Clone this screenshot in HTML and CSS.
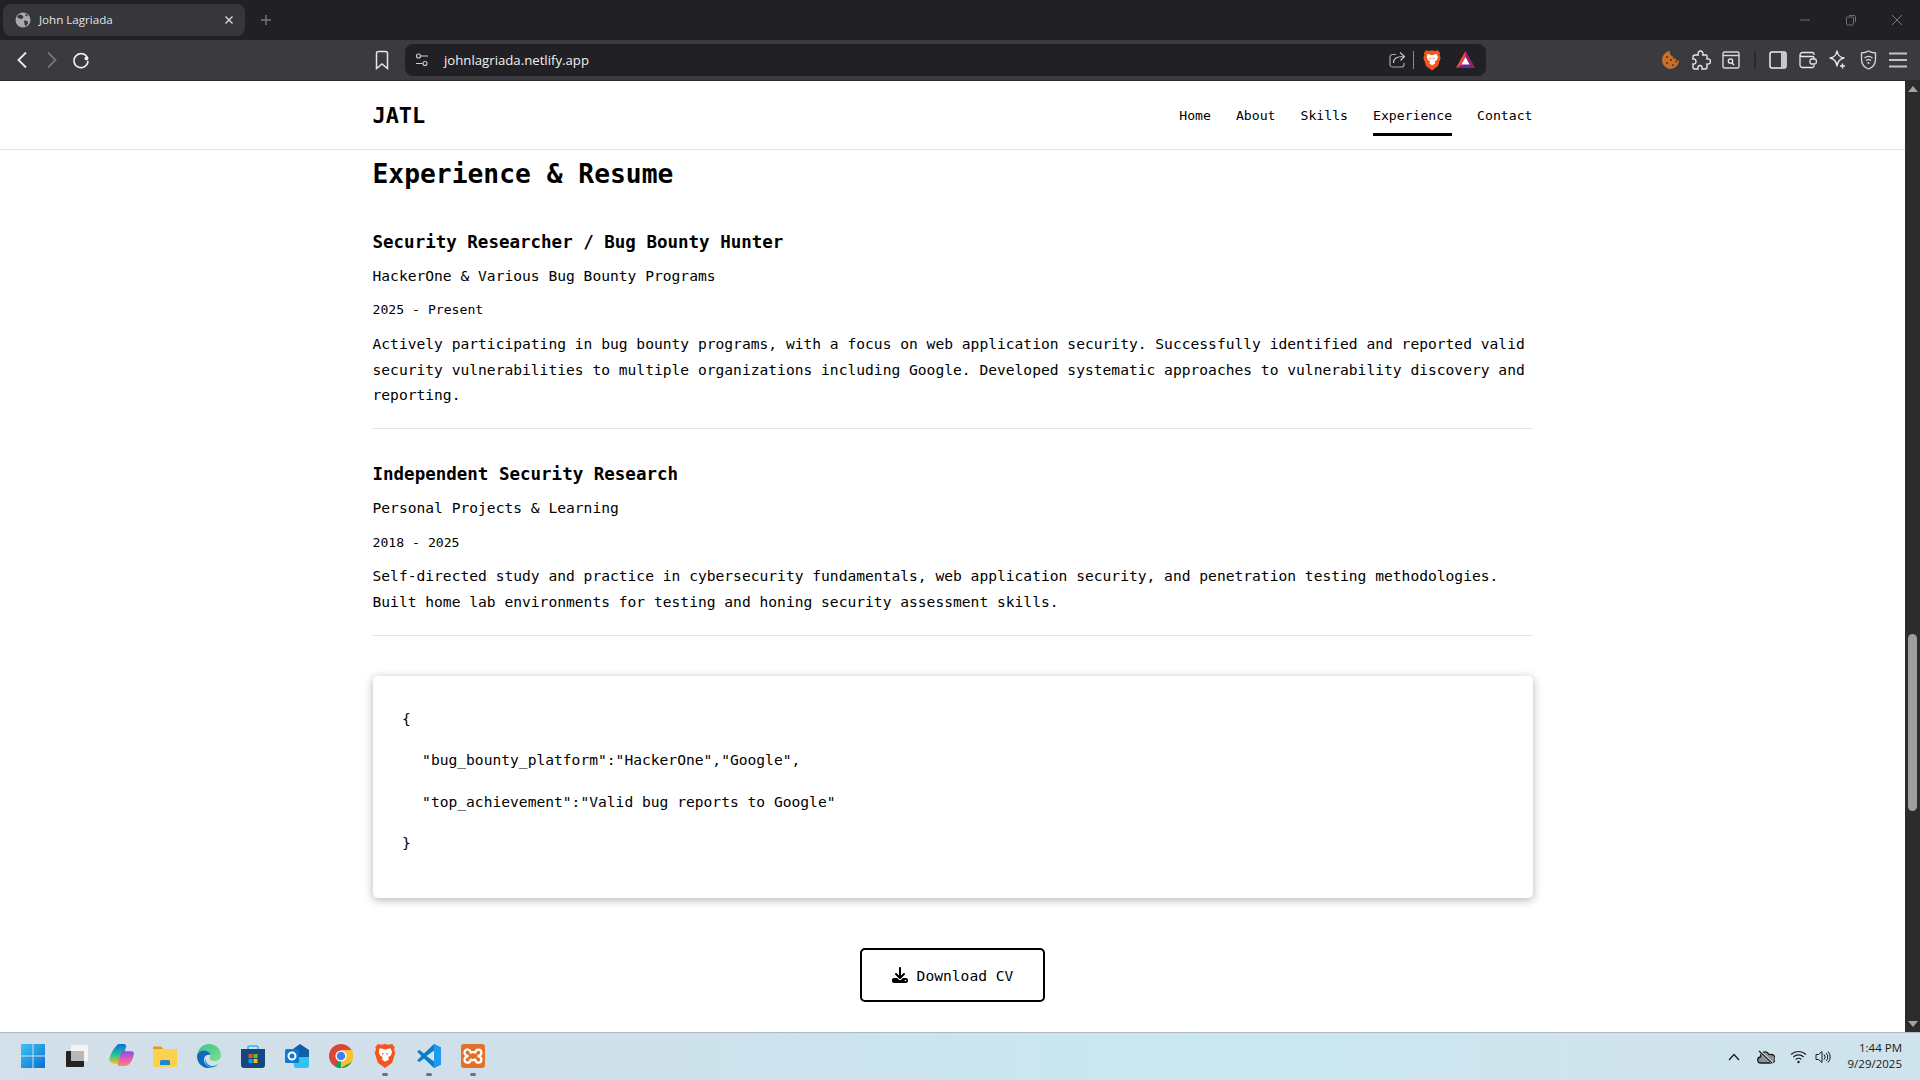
FILE: index.html
```html
<!DOCTYPE html>
<html lang="en">
<head>
<meta charset="utf-8">
<title>John Lagriada</title>
<link rel="stylesheet" href="styles.css">
</head>
<body>
<header class="tabstrip">
  <div class="tab">
    <svg class="tab-globe" width="16" height="16" viewBox="0 0 16 16"><circle cx="8" cy="8" r="7.5" fill="#a8a8ad"/><path d="M4 2.500l3 .5 1.500 2-1.500 2-3-.5-2-1.500zM9 8.500l3.500 .5.500 2.500-2.500 3-1-2.500zM10 1.500l3 2-2 1z" fill="#36363b"/></svg>
    <span class="tab-title">John Lagriada</span>
    <svg class="tab-close" width="10" height="10" viewBox="0 0 10 10"><path d="M1.500 1.500l7 7M8.500 1.500l-7 7" stroke="#d8d8dc" stroke-width="1.400"/></svg>
  </div>
  <svg class="tab-plus" width="12" height="12" viewBox="0 0 12 12"><path d="M6 1v10M1 6h10" stroke="#77777c" stroke-width="1.400"/></svg>
  <div class="win-controls">
    <svg class="win-min" width="12" height="12" viewBox="0 0 12 12"><path d="M1 6h10" stroke="#6e6e73"/></svg>
    <svg class="win-max" width="12" height="12" viewBox="0 0 12 12"><rect x="1.500" y="3" width="7" height="8" rx="1" fill="none" stroke="#6e6e73"/><path d="M4 1.500h5.500a1 1 0 0 1 1 1V8" fill="none" stroke="#6e6e73"/></svg>
    <svg class="win-close" width="12" height="12" viewBox="0 0 12 12"><path d="M1 1l10 10M11 1L1 11" stroke="#77777c"/></svg>
  </div>
</header>

<nav class="toolbar">
  <span class="cell"><svg width="20" height="20" viewBox="0 0 20 20"><path d="M14 2.500L6.500 10l7.500 7.500" fill="none" stroke="#f0f0f2" stroke-width="1.800"/></svg></span>
  <span class="cell"><svg width="20" height="20" viewBox="0 0 20 20"><path d="M6 2.500l7.500 7.500L6 17.500" fill="none" stroke="#737378" stroke-width="1.800"/></svg></span>
  <span class="cell"><svg width="20" height="20" viewBox="0 0 20 20"><path d="M15.500 8A7 7 0 1 0 16 11" fill="none" stroke="#f0f0f2" stroke-width="1.600"/><circle cx="14.500" cy="8.500" r="2" fill="#f0f0f2"/></svg></span>
  <span class="cell bookmark"><svg width="20" height="20" viewBox="0 0 20 20"><path d="M4.500 3.500a2 2 0 0 1 2-2h7a2 2 0 0 1 2 2v15L10 14l-5.500 4.500z" fill="none" stroke="#e8e8ea" stroke-width="1.500"/></svg></span>
  <div class="address">
    <svg class="addr-tune" width="14" height="14" viewBox="0 0 14 14"><g fill="none" stroke="#d0d0d4" stroke-width="1.100"><circle cx="3.500" cy="3" r="2"/><path d="M6 3h7M1 10.500h6.500"/><circle cx="10" cy="10.500" r="2"/></g></svg>
    <span class="url">johnlagriada.netlify.app</span>
    <svg class="addr-share" width="18" height="18" viewBox="0 0 18 18"><path d="M8 3.500H4a2.500 2.500 0 0 0-2 2.500v8a2.500 2.500 0 0 0 2.500 2h9a2.500 2.500 0 0 0 2.500-2.500V12" fill="none" stroke="#a8a8ac" stroke-width="1.200"/><path d="M5.500 12c0-4.500 3-6.500 10-6.500M12 1.500l4.500 4-4 4" fill="none" stroke="#c8c8cc" stroke-width="1.200"/></svg>
    <i class="addr-sep"></i>
    <svg class="addr-brave" width="18" height="22" viewBox="0 0 24 28"><path d="M12 1l4 1 4-1 3 4-1 2 1.500 4-3.500 11-8 6-8-6L.500 11 2 7 1 5l3-4 4 1z" fill="#f4551f"/><path d="M6 6l3 .5 3 1 3-1 3-.5 2 4-1.500 4-3 2 1 2.500L12 21l-3.500-2.500 1-2.500-3-2L5 10zM9 11l2 1-2 1.500zM15 11l-2 1 2 1.500z" fill="#fff" fill-rule="evenodd"/></svg>
    <svg class="addr-bat" width="19" height="17" viewBox="0 0 19 17"><polygon points="9.500,0 19,17 0,17" fill="#662d91"/><polygon points="9.500,0 19,17 14,14 9.500,5" fill="#9e1f63"/><polygon points="9.500,0 9.500,5 5,14 0,17" fill="#ff4724"/><polygon points="9.500,6 13.500,13.500 5.500,13.500" fill="#fff"/></svg>
  </div>
  <div class="tool-right">
    <span class="cell"><svg width="18" height="20" viewBox="0 0 18 20"><path d="M8 1a8.500 9 0 1 0 9 9.500c-2 .5-3-.5-3.500-2-1.500.5-3-.5-3-2.500C8.500 6 7.500 3.500 8 1z" fill="#c8702a"/><circle cx="5" cy="7" r="1.100" fill="#5b3413"/><circle cx="9" cy="10" r="1.100" fill="#5b3413"/><circle cx="5" cy="13" r="1.100" fill="#5b3413"/><circle cx="11" cy="15" r="1.100" fill="#2b4a6b"/><circle cx="14" cy="11.500" r=".9" fill="#5b3413"/></svg></span>
    <span class="cell"><svg width="20" height="20" viewBox="0 0 20 20"><path d="M4 5h3.200C6.400 2.500 8 1 9.500 1s3 1.500 2.300 4H15a1 1 0 0 1 1 1v3c2.500-.5 3.500 1 3.500 2.500S18.500 14.500 16 14v3a2 2 0 0 1-2 2h-3c.5-2.500-.5-3.500-2-3.500S6.500 16.500 7 19H4a2 2 0 0 1-2-2v-3c2 .5 3-1 3-2.500S4 8.500 2 9V7a2 2 0 0 1 2-2z" fill="none" stroke="#e8e8ea" stroke-width="1.400"/></svg></span>
    <span class="cell"><svg width="18" height="18" viewBox="0 0 18 18"><rect x="1" y="1" width="16" height="16" rx="1.500" fill="none" stroke="#d8d8dc" stroke-width="1.400"/><path d="M1 4.500h16" stroke="#d8d8dc" stroke-width="1.400"/><circle cx="8.500" cy="10" r="2.200" fill="none" stroke="#f0f0f2" stroke-width="1.300"/><path d="M10 12l2 2" stroke="#f0f0f2" stroke-width="1.400"/></svg></span>
    <i class="tool-sep-cell"><i class="tool-sep"></i></i>
    <span class="cell"><svg width="18" height="18" viewBox="0 0 18 18"><rect x="1" y="1" width="16" height="16" rx="2" fill="none" stroke="#f0f0f2" stroke-width="1.500"/><path d="M12 1h3a2 2 0 0 1 2 2v12a2 2 0 0 1-2 2h-3z" fill="#c8c8cc"/></svg></span>
    <span class="cell"><svg width="18" height="18" viewBox="0 0 18 18"><path d="M15 4V3a1.500 1.500 0 0 0-1.500-1.500H3.500A2.500 2.500 0 0 0 1 4v10a2.500 2.500 0 0 0 2.500 2.500h10A1.500 1.500 0 0 0 15 15v-1M1 4a2 2 0 0 0 2 1.500h10.500A1.500 1.500 0 0 1 15 7v1" fill="none" stroke="#e8e8ea" stroke-width="1.300"/><rect x="11" y="8" width="6.300" height="5" rx="1.500" fill="none" stroke="#e8e8ea" stroke-width="1.300"/></svg></span>
    <span class="cell"><svg width="18" height="20" viewBox="0 0 18 20"><path d="M8 1c.8 4.500 2.700 6.500 7 7-4.300.8-6.200 2.800-7 8-.8-5.200-2.700-7.200-7-8 4.300-.5 6.200-2.500 7-7z" fill="none" stroke="#e8e8ea" stroke-width="1.400" stroke-linejoin="round"/><path d="M13.500 13.500v5M11 16h5" stroke="#e8e8ea" stroke-width="1.400"/></svg></span>
    <span class="cell"><svg width="17" height="20" viewBox="0 0 17 20"><path d="M8.500 1c2 1.200 4 1.800 7 2v6c0 5-3 8.500-7 10-4-1.500-7-5-7-10V3c3-.2 5-.8 7-2z" fill="none" stroke="#d8d8dc" stroke-width="1.300"/><path d="M4.500 8c2.500-2 5.500-2 8 0M6 10.500c1.500-1 3.500-1 5 0" fill="none" stroke="#d8d8dc" stroke-width="1.200"/><circle cx="8.500" cy="13" r="1" fill="#d8d8dc"/></svg></span>
    <span class="cell"><svg width="18" height="16" viewBox="0 0 18 16"><path d="M0 1.500h18M0 8h18M0 14.500h18" stroke="#c4c4c8" stroke-width="2"/></svg></span>
  </div>
</nav>

<div class="viewport">
  <main class="page">
    <div class="navbar">
      <div class="navbar-inner">
        <span class="brand">JATL</span>
        <div class="nav-links">
          <a class="nav-link">Home</a>
          <a class="nav-link">About</a>
          <a class="nav-link">Skills</a>
          <a class="nav-link active">Experience</a>
          <a class="nav-link">Contact</a>
        </div>
      </div>
    </div>
    <section class="content">
      <h2 class="section-title">Experience &amp; Resume</h2>
      <article class="job">
        <h3 class="job-title">Security Researcher / Bug Bounty Hunter</h3>
        <p class="job-org">HackerOne &amp; Various Bug Bounty Programs</p>
        <p class="job-date">2025 - Present</p>
        <p class="job-desc">Actively participating in bug bounty programs, with a focus on web application security. Successfully identified and reported valid security vulnerabilities to multiple organizations including Google. Developed systematic approaches to vulnerability discovery and reporting.</p>
      </article>
      <article class="job">
        <h3 class="job-title">Independent Security Research</h3>
        <p class="job-org">Personal Projects &amp; Learning</p>
        <p class="job-date">2018 - 2025</p>
        <p class="job-desc">Self-directed study and practice in cybersecurity fundamentals, web application security, and penetration testing methodologies. Built home lab environments for testing and honing security assessment skills.</p>
      </article>
      <div class="code-card">
        <p class="code-line">{</p>
        <p class="code-line indent">"bug_bounty_platform":"HackerOne","Google",</p>
        <p class="code-line indent">"top_achievement":"Valid bug reports to Google"</p>
        <p class="code-line">}</p>
      </div>
      <div class="cta">
        <a class="download">
          <svg width="16" height="16" viewBox="0 0 512 512"><path d="M288 32c0-17.700-14.300-32-32-32s-32 14.300-32 32V274.700l-73.400-73.400c-12.500-12.500-32.800-12.500-45.300 0s-12.500 32.800 0 45.300l128 128c12.500 12.500 32.800 12.500 45.300 0l128-128c12.500-12.500 12.500-32.800 0-45.300s-32.800-12.500-45.300 0L288 274.700V32zM64 352c-35.300 0-64 28.700-64 64v32c0 35.300 28.700 64 64 64H448c35.300 0 64-28.700 64-64V416c0-35.300-28.700-64-64-64H346.500l-45.300 45.300c-25 25-65.500 25-90.500 0L165.500 352H64zm368 56a24 24 0 1 1 0 48 24 24 0 1 1 0-48z"/></svg>
          Download CV
        </a>
      </div>
    </section>
  </main>
  <aside class="scrollbar">
    <i class="arrow-up"></i>
    <i class="thumb"></i>
    <i class="arrow-down"></i>
  </aside>
</div>

<footer class="taskbar">
  <span class="task"><svg width="24" height="24" viewBox="0 0 24 24"><defs><linearGradient id="w" x1="0" y1="0" x2="1" y2="1"><stop offset="0" stop-color="#3cc4f5"/><stop offset="1" stop-color="#0a6fd0"/></linearGradient></defs><path d="M0 0h11.500v11.500H0zM12.500 0H24v11.500H12.500zM0 12.500h11.500V24H0zM12.500 12.500H24V24H12.500z" fill="url(#w)"/></svg></span>
  <span class="task"><svg width="24" height="24" viewBox="0 0 24 24"><rect x="6" y="1" width="17" height="16" rx="1" fill="#f4f4f4"/><rect x="1" y="7" width="18" height="16" rx="1" fill="#232323"/><rect x="6" y="7" width="13" height="10" fill="#b8b8b8"/></svg></span>
  <span class="task"><svg width="25" height="25" viewBox="0 0 24 24"><defs><linearGradient id="c1" x1="0" y1="0" x2="0" y2="1"><stop offset="0" stop-color="#0f6fe0"/><stop offset=".55" stop-color="#22c49a"/><stop offset="1" stop-color="#f8c21a"/></linearGradient><linearGradient id="c2" x1="0" y1="0" x2="0" y2="1"><stop offset="0" stop-color="#8a4de8"/><stop offset=".6" stop-color="#ec5fb0"/><stop offset="1" stop-color="#fb8a5a"/></linearGradient></defs><path d="M9 1h5c1.500 0 2 .5 2.500 2L12 20H7c-3.500 0-5.500-1-6.500-3C-.5 14 4 5 9 1z" fill="url(#c1)"/><path d="M12 8h9c2 0 3 1 3 2-1 6-4 12-9 12h-5c-1.500 0-2-1-1.500-2.500z" fill="url(#c2)"/></svg></span>
  <span class="task"><svg width="24" height="24" viewBox="0 0 24 24"><path d="M0 3.500a1 1 0 0 1 1-1h7l2.500 2.500H0z" fill="#d99f18"/><path d="M0 5h24v17a1 1 0 0 1-1 1H1a1 1 0 0 1-1-1z" fill="#fbd24c"/><path d="M7 17.500a1.500 1.500 0 0 1 1.500-1.500h7a1.500 1.500 0 0 1 1.500 1.500V21H7z" fill="#1f86d0"/></svg></span>
  <span class="task"><svg width="24" height="24" viewBox="0 0 24 24"><defs><linearGradient id="e1" x1="0" y1="0" x2="1" y2="1"><stop offset="0" stop-color="#36c58a"/><stop offset="1" stop-color="#7fe08a"/></linearGradient></defs><path d="M12 0c7 0 12 5 12 11.500 0 4-3.500 5.500-6.500 5.500-3 0-5-1.500-5-3 0-1 1-1 1-2.500C13.500 8.500 10 6 6.500 6.500 3.500 7 1 9.500 0 12 .5 5 5.500 0 12 0z" fill="url(#e1)"/><path d="M0 12c1-4 4-5.500 7-5.500 4 0 6.500 2.500 6.500 4.500-3-1-6.500 .5-6.500 4.500S11 24 15 24h1c-1 .5-3 .5-4 .5C5 24 0 19 0 12z" fill="#0f6cbd"/><path d="M8.500 14.500c0 5 4 7.500 7.500 7.500 2 0 4.500-1 6-3-1.500 3-5 5-9 4.500-3-1-6-5-4.500-9z" fill="#1595d8"/></svg></span>
  <span class="task"><svg width="24" height="24" viewBox="0 0 24 24"><path d="M7 6V3.500A1.500 1.500 0 0 1 8.500 2h7A1.500 1.500 0 0 1 17 3.500V6" fill="none" stroke="#2fb6ef" stroke-width="1.600"/><path d="M0 5h24v16a3 3 0 0 1-3 3H3a3 3 0 0 1-3-3z" fill="#15467f"/><rect x="7.500" y="10" width="4" height="4" fill="#f25022"/><rect x="12.500" y="10" width="4" height="4" fill="#7fba00"/><rect x="7.500" y="15" width="4" height="4" fill="#00a4ef"/><rect x="12.500" y="15" width="4" height="4" fill="#ffb900"/></svg></span>
  <span class="task"><svg width="24" height="24" viewBox="0 0 24 24"><path d="M15 0l9 6v8H8V5z" fill="#0f5ea8"/><path d="M8 13h16v9a2 2 0 0 1-2 2H11a2 2 0 0 1-2-2z" fill="#35c3ee"/><rect x="0" y="5" width="14" height="14" rx="1.500" fill="#0f78d4"/><circle cx="7" cy="12" r="3.500" fill="none" stroke="#fff" stroke-width="2"/></svg></span>
  <span class="task"><svg width="24" height="24" viewBox="0 0 24 24"><circle cx="12" cy="12" r="12" fill="#db4437"/><path d="M12 12L22.400 18A12 12 0 0 1 6 22.400z" fill="#0f9d58"/><path d="M12 6h10.900A12 12 0 0 1 22.400 18L12 24z" fill="#fbc02d" /><circle cx="12" cy="12" r="5.600" fill="#fff"/><circle cx="12" cy="12" r="4.300" fill="#3f82ee"/></svg></span>
  <span class="task"><svg width="22" height="25" viewBox="0 0 24 28"><path d="M12 1l4 1 4-1 3 4-1 2 1.500 4-3.500 11-8 6-8-6L.500 11 2 7 1 5l3-4 4 1z" fill="#f4551f"/><path d="M6 6l3 .5 3 1 3-1 3-.5 2 4-1.500 4-3 2 1 2.500L12 21l-3.500-2.500 1-2.500-3-2L5 10zM9 11l2 1-2 1.500zM15 11l-2 1 2 1.500z" fill="#fff" fill-rule="evenodd"/></svg><i class="running"></i></span>
  <span class="task"><svg width="24" height="24" viewBox="0 0 24 24"><path d="M17 0l7 3.500v17L17 24 7 14.500 2.500 18 0 16.500 4.500 12 0 7.500 2.500 6 7 9.500z" fill="#0a7cc8"/><path d="M17 6.500L9.500 12l7.500 5.500z" fill="#d0e6f0"/><path d="M17 0l7 3.500v17L17 24z" fill="#1f9cf0"/></svg><i class="running"></i></span>
  <span class="task"><svg width="24" height="24" viewBox="0 0 24 24"><rect width="24" height="24" rx="3" fill="#e4702a"/><path d="M7 5.500a3 3 0 0 0-1 6c1 .2 1 1 0 1.200a3 3 0 1 0 3.500 3.500c.2-1 1-1 1.200 0h2.600c.2-1 1-1 1.200 0a3 3 0 1 0 3.500-3.500c-1-.2-1-1 0-1.200a3 3 0 1 0-3.500-3.500c-.2 1-1 1-1.200 0h-2.600c-.2 1-1 1-1.200 0A3 3 0 0 0 7 5.500z" fill="none" stroke="#fff" stroke-width="2.200"/></svg><i class="running"></i></span>
  <div class="tray">
    <svg class="tray-chevron" width="12" height="8" viewBox="0 0 12 8"><path d="M1 7l5-5.500L11 7" fill="none" stroke="#1c1c1c" stroke-width="1.300"/></svg>
    <svg class="tray-cloud" width="18" height="14" viewBox="0 0 18 14"><path d="M4 13a3 3 0 0 1-.5-6A4.500 4.500 0 0 1 12 4.500a3.500 3.500 0 0 1 2 0A4 4 0 0 1 14 13z" fill="#8b9397" stroke="#1c1c1c" stroke-width="1.300"/><path d="M2.500 1l13 12" stroke="#d4e4ec" stroke-width="2.500"/><path d="M2 1l13 12" stroke="#1c1c1c" stroke-width="1.200"/></svg>
    <svg class="tray-wifi" width="17" height="14" viewBox="0 0 17 14"><g fill="none" stroke="#1c1c1c" stroke-width="1.100"><path d="M1 4.500c4.300-4 10.700-4 15 0M3.300 7c3-2.800 7.400-2.800 10.400 0M5.700 9.500c1.600-1.400 4-1.400 5.600 0"/></g><circle cx="8.500" cy="12" r="1.200" fill="#1c1c1c"/></svg>
    <svg class="tray-sound" width="16" height="14" viewBox="0 0 16 14"><path d="M1 4.500h2.500L7 1.500v11l-3.500-3H1z" fill="none" stroke="#1c1c1c"/><path d="M9 4.500a3.500 3.500 0 0 1 0 5M11 3a5.500 5.500 0 0 1 0 8M13 1.500a8 8 0 0 1 0 11" fill="none" stroke="#1c1c1c"/></svg>
    <div class="clock"><span>1:44 PM</span><span>9/29/2025</span></div>
  </div>
</footer>
</body>
</html>
```

FILE: styles.css
```css
* { box-sizing: border-box; }

html, body { margin: 0; height: 100%; }

body {
  display: flex;
  flex-direction: column;
  height: 100vh;
  overflow: hidden;
  background: #fff;
  font-family: "DejaVu Sans Mono", "Liberation Mono", monospace;
  color: #000;
}

svg { display: block; flex: none; }

/* Browser tab strip */
.tabstrip {
  flex: none;
  height: 40px;
  display: flex;
  align-items: center;
  background: #202025;
  padding-left: 3px;
}

.tab {
  width: 242px;
  height: 32px;
  display: flex;
  align-items: center;
  padding: 0 11px 0 12px;
  border-radius: 8px;
  background: #36363b;
  margin-top: -1px;
}

.tab-globe { margin-right: 8px; }

.tab-title {
  flex: 1;
  font: 11.6px "Open Sans", "Noto Sans", sans-serif;
  color: #e2e2e5;
}

.tab-plus { margin-left: 15px; }

.win-controls {
  margin-left: auto;
  display: flex;
  align-items: center;
  padding-right: 17px;
}

.win-max { margin-left: 34px; }
.win-close { margin-left: 34px; }

/* Toolbar */
.toolbar {
  flex: none;
  height: 41px;
  display: flex;
  align-items: center;
  padding: 0 7px 1px;
  background: #3a3a3f;
  border-bottom: 1px solid #2a2a2e;
}

.cell {
  width: 30px;
  height: 30px;
  flex: none;
  display: flex;
  align-items: center;
  justify-content: center;
}

.bookmark { margin-left: 270px; margin-right: 8px; }

.address {
  flex: none;
  width: 1081px;
  height: 32px;
  display: flex;
  align-items: center;
  padding-left: 10px;
  border-radius: 8px;
  background: #202025;
}

.addr-tune { margin-right: 15px; }

.url {
  flex: 1;
  font: 13.2px "Open Sans", "Noto Sans", sans-serif;
  color: #f0f0f2;
}

.addr-sep {
  width: 1px;
  height: 18px;
  margin: 0 9px 0 7px;
  background: #8a8a8e;
}

.addr-bat { margin: 0 11px 0 15px; }

.tool-right {
  margin-left: auto;
  display: flex;
  align-items: center;
}

.tool-sep-cell {
  width: 17px;
  display: flex;
  justify-content: center;
}

.tool-sep {
  width: 2px;
  height: 18px;
  background: #2a2a2e;
}

/* Page area */
.viewport {
  flex: 1;
  min-height: 0;
  display: flex;
}

.page {
  flex: 1;
  min-width: 0;
  overflow: hidden;
  background: #fff;
}

.navbar {
  height: 69px;
  border-bottom: 1px solid #e5e5e5;
}

.navbar-inner {
  width: 1160px;
  height: 100%;
  margin: 0 auto;
  display: flex;
  align-items: center;
  justify-content: space-between;
}

.brand {
  font-size: 21.9px;
  font-weight: 700;
}

.nav-links {
  display: flex;
  gap: 25px;
}

.nav-link {
  padding: 6px 0;
  border-top: 3px solid transparent;
  border-bottom: 3px solid transparent;
  font-size: 13.15px;
  line-height: 23px;
}

.nav-link.active { border-bottom-color: #000; }

.content {
  width: 1160px;
  margin: 0 auto;
  padding-top: 1px;
}

.section-title {
  margin: 0 0 29.6px;
  font-size: 26.3px;
  line-height: 46px;
  font-weight: 700;
}

.job {
  margin-bottom: 30px;
  padding-bottom: 20.1px;
  border-bottom: 1px solid #e5e5e5;
}

.job-title {
  margin: 0 0 5.500px;
  font-size: 17.5px;
  line-height: 30.7px;
  font-weight: 700;
}

.job-org {
  margin: 0 0 10px;
  font-size: 14.62px;
  line-height: 25.6px;
}

.job-date {
  margin: 0 0 9.6px;
  font-size: 13.15px;
  line-height: 23px;
}

.job-desc {
  margin: 0;
  font-size: 14.62px;
  line-height: 25.6px;
}

.code-card {
  margin-top: 40px;
  padding: 30px 28.8px 26.400px 29.600px;
  border-radius: 5px;
  box-shadow: 0 2px 10px rgba(0, 0, 0, 0.3);
}

.code-line {
  margin: 0 0 16px;
  font-size: 14.62px;
  line-height: 25.6px;
}

.code-line.indent { padding-left: 20px; }

.cta {
  display: flex;
  justify-content: center;
  margin-top: 50px;
}

.download {
  width: 185px;
  height: 54px;
  display: flex;
  align-items: center;
  justify-content: center;
  gap: 9px;
  border: 2px solid #000;
  border-radius: 5px;
  font-size: 14.62px;
}

/* Scrollbar */
.scrollbar {
  flex: none;
  width: 15px;
  display: flex;
  flex-direction: column;
  align-items: center;
  background: #2c2c2c;
  padding: 5px 0;
}

.arrow-up, .arrow-down {
  width: 0;
  height: 0;
  border-left: 5px solid transparent;
  border-right: 5px solid transparent;
}

.arrow-up { border-bottom: 6px solid #a3a3a3; }

.arrow-down {
  border-top: 6px solid #a3a3a3;
  margin-top: auto;
}

.thumb {
  width: 9px;
  height: 177px;
  margin-top: 542px;
  border-radius: 5px;
  background: #9e9e9e;
}

/* Windows taskbar */
.taskbar {
  flex: none;
  height: 48px;
  display: flex;
  align-items: center;
  padding-left: 11px;
  border-top: 1px solid #aeb9c0;
  background: linear-gradient(90deg, #d3dfe9 0%, #cfe0ea 30%, #c8e8f2 62%, #d0e3ec 85%, #cfe3ec 100%);
}

.task {
  position: relative;
  width: 44px;
  height: 100%;
  flex: none;
  display: flex;
  align-items: center;
  justify-content: center;
  padding-bottom: 2px;
}

.running {
  position: absolute;
  left: 19px;
  bottom: 4px;
  width: 6px;
  height: 3px;
  border-radius: 2px;
  background: #6b7378;
}

.tray {
  margin-left: auto;
  display: flex;
  align-items: center;
  padding-right: 18px;
}

.tray-cloud { margin-left: 17px; }
.tray-wifi { margin-left: 15px; }
.tray-sound { margin-left: 8px; }

.clock {
  display: flex;
  flex-direction: column;
  align-items: flex-end;
  gap: 1px;
  margin-left: 17px;
  padding-bottom: 2px;
  font: 11.5px/15px "Open Sans", "Noto Sans", sans-serif;
  color: #1a1a1a;
}
```
